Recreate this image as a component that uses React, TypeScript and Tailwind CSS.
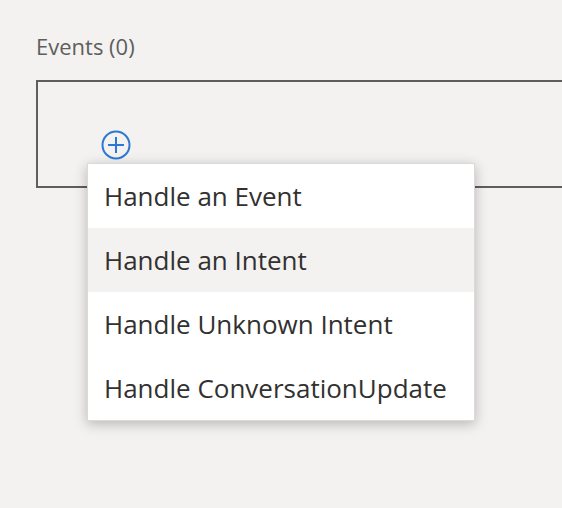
import React from 'react';

const items = ['Handle an Event', 'Handle an Intent', 'Handle Unknown Intent', 'Handle ConversationUpdate'];

export default function App() {
  return (
    <div
      className="relative h-[508px] w-[562px] overflow-hidden bg-[#f3f2f1]"
      style={{ fontFamily: '"Open Sans", "Noto Sans", sans-serif' }}
    >
      <div className="pl-[36px] pt-[30px]">
        <div className="text-[22px] leading-[32px] text-[#605e5c]">Events (0)</div>
        <div className="mt-[18px] h-[108px] w-[600px] border-2 border-[#605e5c]">
          <div className="pl-[63px] pt-[48px]">
            {/* add button */}
            <svg width="30" height="30" viewBox="0 0 30 30" fill="none" stroke="#2b78d4" strokeWidth="2">
              <circle cx="15" cy="15" r="13.5" />
              <path d="M15 7v16M7 15h16" />
            </svg>
          </div>
        </div>
      </div>

      {/* Menu */}
      <div className="absolute left-[87px] top-[163px] w-[388px] border border-[#dcdad8] bg-white shadow-[0_3px_12px_rgba(0,0,0,0.25)]">
        {items.map((label, i) => (
          <div
            key={label}
            className={`flex h-[64px] items-center pl-[16px] text-[26px] text-[#323130] ${i === 1 ? 'bg-[#f3f2f1]' : ''}`}
          >
            {label}
          </div>
        ))}
      </div>
    </div>
  );
}
